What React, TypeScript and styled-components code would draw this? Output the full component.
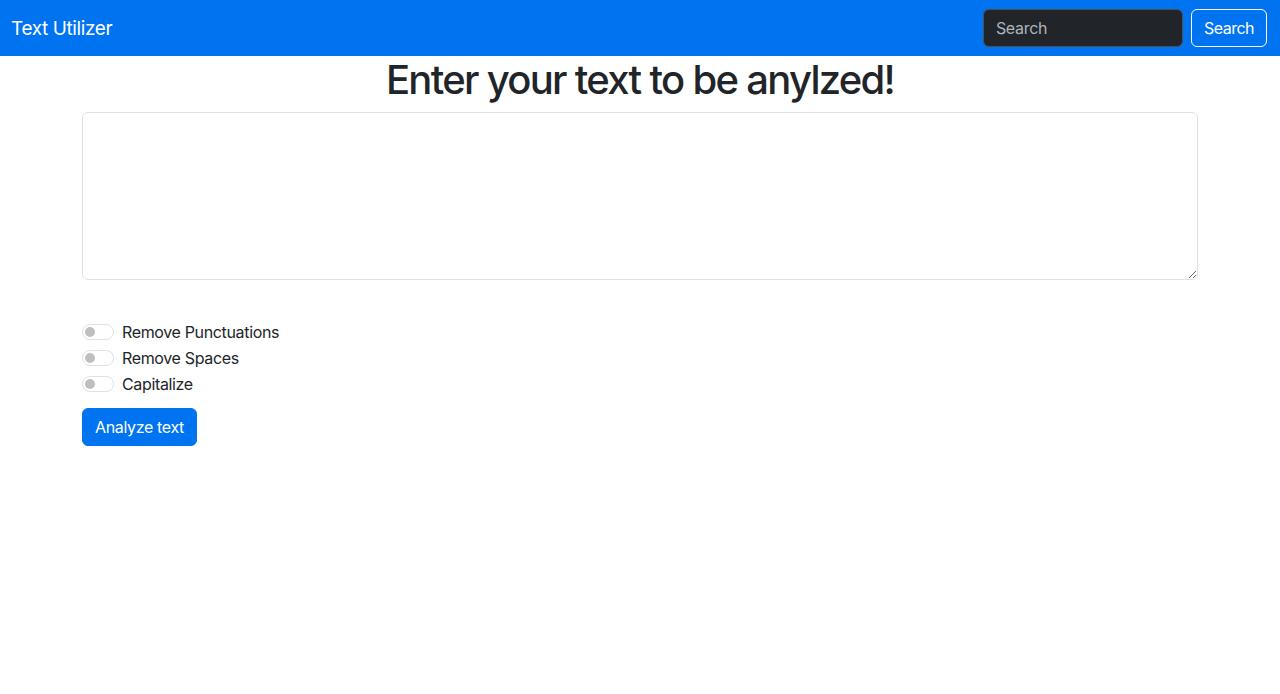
import React from "react";
import styled, { createGlobalStyle } from "styled-components";

const Global = createGlobalStyle`
  *, *::before, *::after { box-sizing: border-box; }
  html, body { margin: 0; padding: 0; }
  body {
    font-family: Inter, "Noto Sans", "Liberation Sans", sans-serif;
    font-size: 16px;
    line-height: 1.5;
    color: #212529;
    background: #fff;
  }
`;

const Navbar = styled.nav`
  height: 56px;
  background: #0074f0;
  display: flex;
  align-items: center;
  justify-content: space-between;
  padding: 0 12px;
`;

const Brand = styled.a`
  color: #fff;
  font-size: 19px;
  line-height: 30px;
  padding-top: 2px;
  text-decoration: none;
  letter-spacing: -0.4px;
  margin-left: -1px;
`;

const SearchForm = styled.form`
  display: flex;
  align-items: center;
  gap: 8px;
  margin-right: 1px;
`;

const SearchInput = styled.input`
  width: 200px;
  height: 38px;
  background: #212529;
  border: 1px solid #495057;
  border-radius: 6px;
  padding: 6px 12px;
  font: inherit;
  font-size: 16px;
  letter-spacing: -0.3px;
  color: #fff;
  &::placeholder { color: #adb5bd; }
  outline: none;
`;

const OutlineButton = styled.button`
  height: 38px;
  padding: 0 12px;
  background: transparent;
  color: #fff;
  border: 1px solid #fff;
  border-radius: 6px;
  font: inherit;
  font-size: 16px;
  letter-spacing: -0.5px;
`;

const Container = styled.main`
  width: 1140px;
  margin: 0 auto;
  padding: 0 12px;
`;

const Heading = styled.h1`
  margin: 0 0 8px;
  font-size: 40px;
  font-weight: 500;
  line-height: 48px;
  text-align: center;
  letter-spacing: -1.7px;
`;

const TextArea = styled.textarea`
  display: block;
  width: 100%;
  height: 168px;
  border: 1px solid #dee2e6;
  border-radius: 6px;
  padding: 6px 12px;
  font: inherit;
  resize: vertical;
  outline: none;
  margin-bottom: 40px;
`;

const Options = styled.div`
  display: flex;
  flex-direction: column;
  gap: 2px;
  margin-bottom: 12px;
`;

const Check = styled.label`
  display: flex;
  align-items: center;
  gap: 8px;
  height: 24px;
  font-size: 16px;
  letter-spacing: -0.35px;
`;

const Switch = styled.input.attrs({ type: "checkbox" })`
  appearance: none;
  margin: 0;
  width: 32px;
  height: 16px;
  border: 1px solid #dee2e6;
  border-radius: 8px;
  background: #fff;
  position: relative;
  flex: none;
  &::after {
    content: "";
    position: absolute;
    left: 2px;
    top: 2px;
    width: 10px;
    height: 10px;
    border-radius: 50%;
    background: #bfbfbf;
  }
`;

const PrimaryButton = styled.button`
  height: 38px;
  padding: 0 12px;
  background: #0074f0;
  color: #fff;
  border: 1px solid #0074f0;
  border-radius: 6px;
  font: inherit;
  font-size: 16px;
  letter-spacing: -0.35px;
`;

export default function App() {
  const options = ["Remove Punctuations", "Remove Spaces", "Capitalize"];
  return (
    <>
      <Global />
      <Navbar>
        <Brand href="#">Text Utilizer</Brand>
        <SearchForm onSubmit={(e) => e.preventDefault()}>
          <SearchInput placeholder="Search" />
          <OutlineButton type="submit">Search</OutlineButton>
        </SearchForm>
      </Navbar>
      <Container>
        <Heading>Enter your text to be anylzed!</Heading>
        <TextArea />
        <Options>
          {options.map((o) => (
            <Check key={o}>
              <Switch />
              {o}
            </Check>
          ))}
        </Options>
        <PrimaryButton>Analyze text</PrimaryButton>
      </Container>
    </>
  );
}
